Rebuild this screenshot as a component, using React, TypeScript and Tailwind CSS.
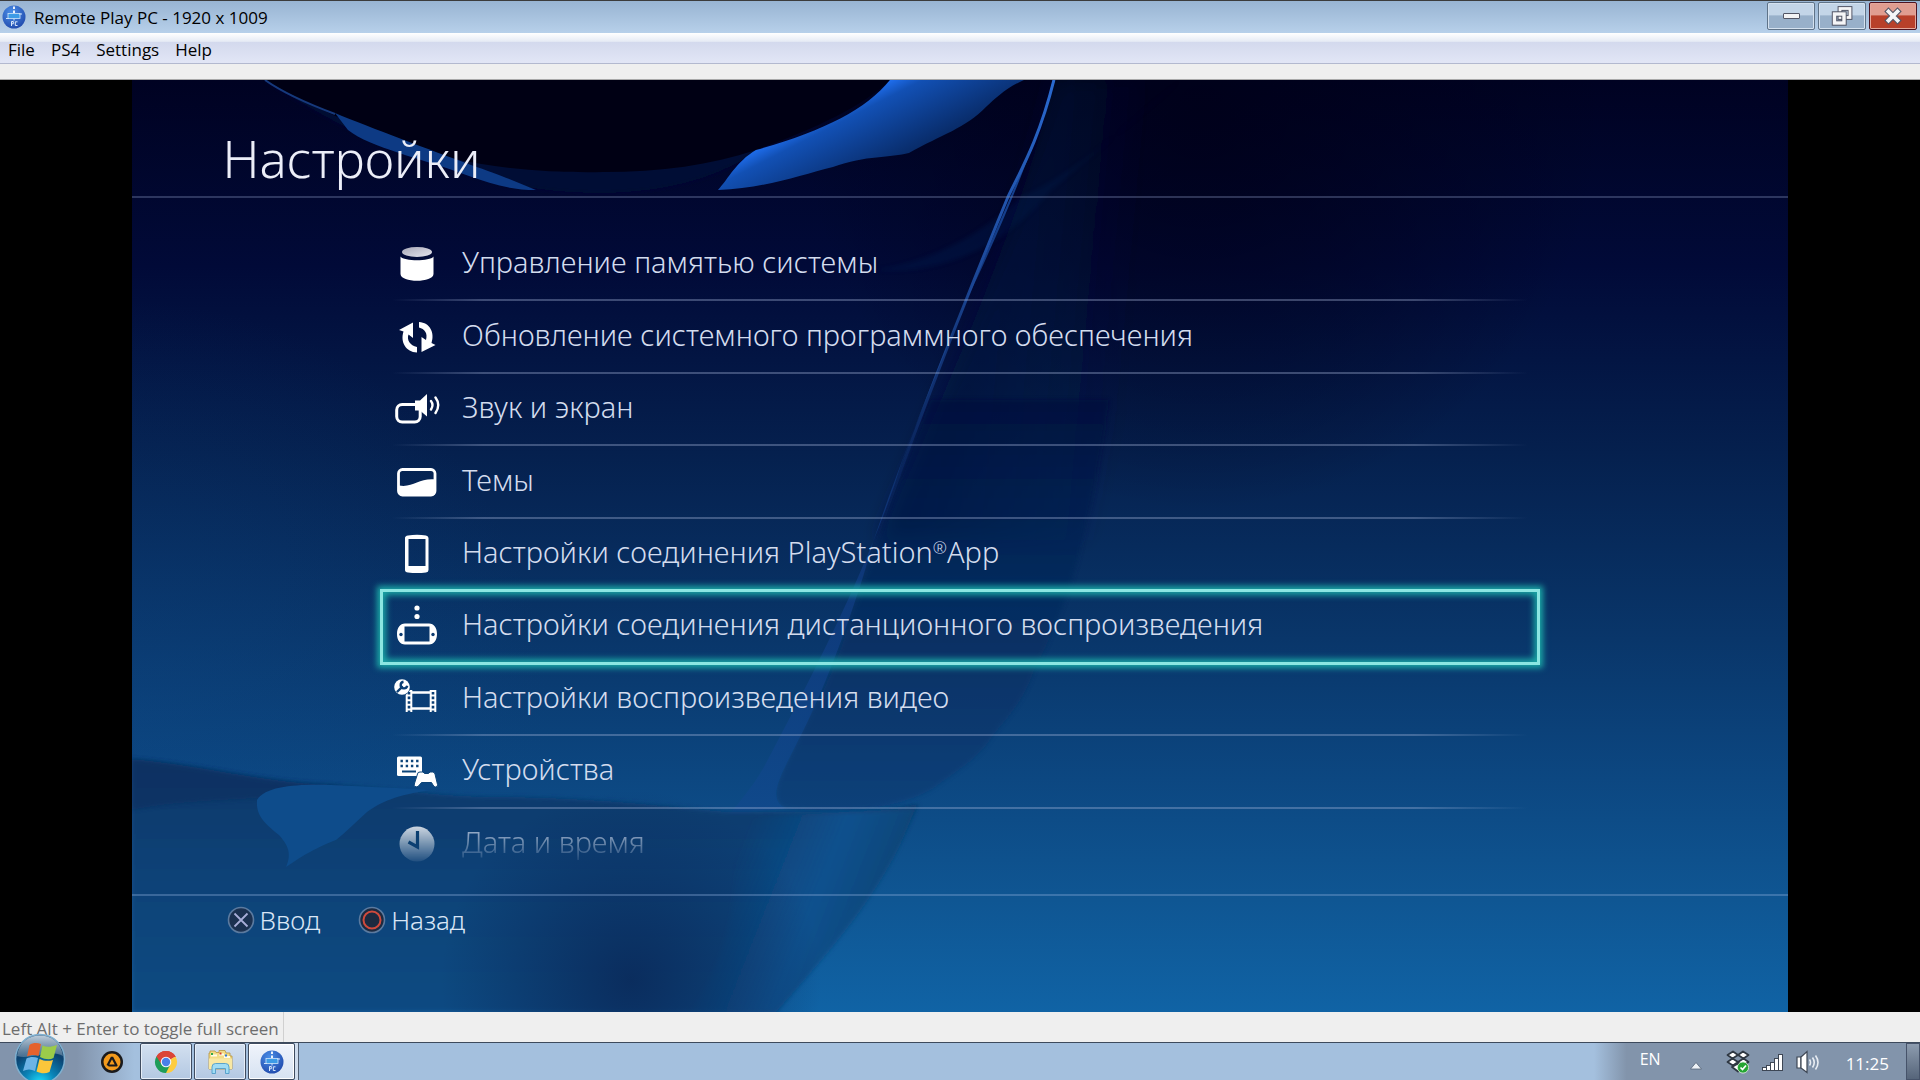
import type { ReactNode } from 'react';

interface MenuItem {
  label: string;
  icon: ReactNode;
  suffix?: string;
}

const MENUS = ['File', 'PS4', 'Settings', 'Help'];

const ITEMS: MenuItem[] = [
  { label: 'Управление памятью системы', icon: <StorageIcon /> },
  { label: 'Обновление системного программного обеспечения', icon: <UpdateIcon /> },
  { label: 'Звук и экран', icon: <SoundIcon /> },
  { label: 'Темы', icon: <ThemeIcon /> },
  { label: 'Настройки соединения PlayStation', suffix: 'App', icon: <PhoneIcon /> },
  { label: 'Настройки соединения дистанционного воспроизведения', icon: <RemoteIcon /> },
  { label: 'Настройки воспроизведения видео', icon: <VideoIcon /> },
  { label: 'Устройства', icon: <DevicesIcon /> },
  { label: 'Дата и время', icon: <ClockIcon /> },
];

const SELECTED = 5;

function StorageIcon() {
  return (
    <svg viewBox="0 0 48 48" className="size-12" aria-hidden="true">
      <defs>
        <linearGradient id="lid" x1="0" y1="0" x2="1" y2="1">
          <stop offset="0" stopColor="#a9a9b8" />
          <stop offset="1" stopColor="#e4e4ee" />
        </linearGradient>
      </defs>
      <ellipse cx="24" cy="12" rx="15" ry="5" fill="url(#lid)" />
      <path d="M7.500 16.500C11 21.500 37 21.500 40.500 16.500V34C40.500 43 7.500 43 7.500 34Z" fill="#fff" />
    </svg>
  );
}

function UpdateIcon() {
  return (
    <svg viewBox="0 0 48 48" className="size-12" fill="#fff" aria-hidden="true">
      <path d="M6 17L20 9.500V25L15.500 21.500C13.500 27 17 32.500 24 34V39.500C13 39 7 29 10.500 18.500Z" />
      <path d="M26 9C37 9.500 42 20 38.500 30L42.500 32L28.500 39V24L33 27C35 20 31.500 16 26 14.500Z" />
    </svg>
  );
}

function SoundIcon() {
  return (
    <svg viewBox="0 0 48 48" className="size-12" fill="none" aria-hidden="true">
      <rect x="3.700" y="19.500" width="23.500" height="17.500" rx="5.500" stroke="#fff" strokeWidth="3" />
      <path d="M22 15.500H27L34 9V31.500L27 25.500H22Z" fill="#fff" />
      <path d="M38 16Q41 20 38 24.500M42.500 12.500Q48 20 42.500 28" stroke="#fff" strokeWidth="2.400" strokeLinecap="round" />
    </svg>
  );
}

function ThemeIcon() {
  return (
    <svg viewBox="0 0 48 48" className="size-12" aria-hidden="true">
      <rect x="5.500" y="11.500" width="36.500" height="25.500" rx="4" fill="none" stroke="#fff" strokeWidth="2.800" />
      <path d="M6 27.500C20 30 26 20 42 21.500V35Q42 37.500 39 37.500H9Q6 37.500 6 35Z" fill="#fff" />
    </svg>
  );
}

function PhoneIcon() {
  return (
    <svg viewBox="0 0 48 48" className="size-12" aria-hidden="true">
      <path
        fill="#fff"
        fillRule="evenodd"
        d="M15 5.500Q24 4 33 5.500Q35.500 6 35.500 8V40Q35.500 42 33 42.500Q24 43.500 15 42.500Q12 42 12 40V8Q12 6 15 5.500ZM15.500 9V36H32.500V9Z"
      />
    </svg>
  );
}

function RemoteIcon() {
  return (
    <svg viewBox="0 0 48 48" className="size-12" aria-hidden="true">
      <circle cx="24" cy="6" r="2.600" fill="#fff" />
      <circle cx="24" cy="14.500" r="2.600" fill="#fff" />
      <path
        fill="#fff"
        fillRule="evenodd"
        d="M12 21.500H36C41 21.500 44 26 44 32S41 42.500 36 42.500H12C7 42.500 4 38 4 32S7 21.500 12 21.500ZM11.500 24.500V39.500H36.500V24.500Z"
      />
      <circle cx="8" cy="32.500" r="1.700" fill="#0b3a70" />
      <circle cx="40" cy="32.500" r="1.700" fill="#0b3a70" />
    </svg>
  );
}

function VideoIcon() {
  return (
    <svg viewBox="0 0 48 48" className="size-12" fill="none" aria-hidden="true">
      <path d="M16 15V37M40 15V37" stroke="#fff" strokeWidth="6.600" />
      <path d="M16 17.500H40M16 33.500H40" stroke="#fff" strokeWidth="2.400" />
      <path d="M16 17V37M40 17V37" stroke="#0b3f75" strokeWidth="2.600" strokeDasharray="2.600 2" />
      <circle cx="9" cy="12" r="8.600" fill="#0b3f75" />
      <circle cx="9" cy="12" r="7.800" fill="#fff" />
      <path d="M4.500 16.500L9 12" stroke="#0b3f75" strokeWidth="2.400" strokeLinecap="round" />
      <path d="M10.500 6.800A3.300 3.300 0 1 0 14.200 10.800" stroke="#0b3f75" strokeWidth="2.400" />
    </svg>
  );
}

function DevicesIcon() {
  return (
    <svg viewBox="0 0 48 48" className="size-12" fill="none" aria-hidden="true">
      <rect x="4" y="9.500" width="25" height="19.500" rx="1.500" fill="#fff" />
      <path d="M7.500 14H26M7.500 19H26" stroke="#0c4478" strokeWidth="2.400" strokeDasharray="2.400 2.800" />
      <path d="M9 24.500H23" stroke="#0c4478" strokeWidth="2" />
      <path
        d="M24.500 27Q24.500 25 27 25H30L31.500 26.500H35.500L37 25H39.500Q41.500 25 42 27L44.500 37.500Q45 40 42.500 40Q41 40 40 38L38.500 35.500H28.500L25.500 39Q24 40.500 22 39.500Q21 39 21.300 37Z"
        fill="#fff"
        stroke="#0c4478"
        strokeWidth="1"
      />
    </svg>
  );
}

function ClockIcon() {
  return (
    <svg viewBox="0 0 48 48" className="size-12" aria-hidden="true">
      <circle cx="24" cy="24" r="17.500" fill="#fff" />
      <path d="M24.500 11V27L15.500 22" fill="none" stroke="#0b4070" strokeWidth="3.200" />
    </svg>
  );
}

function Waves() {
  return (
    <svg
      viewBox="131 80 1657 932"
      preserveAspectRatio="none"
      className="absolute inset-0 size-full"
      aria-hidden="true"
    >
      <defs>
        <linearGradient id="sky" x1="0" y1="0" x2="0" y2="1">
          <stop offset="0" stopColor="#000222" />
          <stop offset="0.200" stopColor="#010a38" />
          <stop offset="0.400" stopColor="#05204e" />
          <stop offset="0.600" stopColor="#09366a" />
          <stop offset="0.750" stopColor="#0c4781" />
          <stop offset="0.880" stopColor="#0f5693" />
          <stop offset="1" stopColor="#1063a5" />
        </linearGradient>
        <radialGradient id="night" gradientUnits="userSpaceOnUse" cx="1200" cy="110" r="400">
          <stop offset="0" stopColor="#000018" stopOpacity="0.800" />
          <stop offset="1" stopColor="#000018" stopOpacity="0" />
        </radialGradient>
        <linearGradient id="crescent" gradientUnits="userSpaceOnUse" x1="820" y1="115" x2="855" y2="183">
          <stop offset="0" stopColor="#1f6ff0" />
          <stop offset="0.200" stopColor="#1250b4" />
          <stop offset="1" stopColor="#082a66" />
        </linearGradient>
        <linearGradient id="petal" gradientUnits="userSpaceOnUse" x1="0" y1="80" x2="0" y2="810">
          <stop offset="0" stopColor="#00021e" stopOpacity="0.500" />
          <stop offset="0.400" stopColor="#010a38" />
          <stop offset="0.700" stopColor="#062a5c" />
          <stop offset="1" stopColor="#0b3c74" />
        </linearGradient>
        <linearGradient id="petalFade" gradientUnits="userSpaceOnUse" x1="900" y1="400" x2="1120" y2="420">
          <stop offset="0" stopColor="#020a36" stopOpacity="0.850" />
          <stop offset="1" stopColor="#05204e" stopOpacity="0" />
        </linearGradient>
        <linearGradient id="band" gradientUnits="userSpaceOnUse" x1="0" y1="80" x2="0" y2="820">
          <stop offset="0" stopColor="#1d5bc0" />
          <stop offset="0.250" stopColor="#16418e" />
          <stop offset="0.550" stopColor="#0f3478" />
          <stop offset="1" stopColor="#10498c" />
        </linearGradient>
        <linearGradient id="edge" gradientUnits="userSpaceOnUse" x1="0" y1="80" x2="0" y2="540">
          <stop offset="0" stopColor="#2a6ad0" />
          <stop offset="0.400" stopColor="#1d4a9c" />
          <stop offset="1" stopColor="#153c80" stopOpacity="0" />
        </linearGradient>
        <linearGradient id="floor" gradientUnits="userSpaceOnUse" x1="0" y1="760" x2="0" y2="1012">
          <stop offset="0" stopColor="#0a3768" />
          <stop offset="0.450" stopColor="#0b4277" />
          <stop offset="1" stopColor="#0c4a82" />
        </linearGradient>
        <radialGradient id="pool" gradientUnits="userSpaceOnUse" cx="630" cy="980" r="190">
          <stop offset="0" stopColor="#0a2858" stopOpacity="0.850" />
          <stop offset="1" stopColor="#0a2858" stopOpacity="0" />
        </radialGradient>
        <linearGradient id="stem" gradientUnits="userSpaceOnUse" x1="730" y1="870" x2="870" y2="925">
          <stop offset="0" stopColor="#0e5290" stopOpacity="0" />
          <stop offset="0.600" stopColor="#0e5290" stopOpacity="0.900" />
          <stop offset="1" stopColor="#0c4679" />
        </linearGradient>
        <radialGradient id="vignette" gradientUnits="userSpaceOnUse" cx="131" cy="720" r="420">
          <stop offset="0" stopColor="#0d4888" stopOpacity="0.300" />
          <stop offset="1" stopColor="#0d4888" stopOpacity="0" />
        </radialGradient>
        <filter id="soft">
          <feGaussianBlur stdDeviation="2" />
        </filter>
        <filter id="haze">
          <feGaussianBlur stdDeviation="10" />
        </filter>
      </defs>
      <rect x="131" y="80" width="1657" height="932" fill="url(#sky)" />
      <rect x="131" y="80" width="1657" height="932" fill="url(#night)" />
      <rect x="131" y="80" width="1657" height="932" fill="url(#vignette)" />

      {/* disc and the ribbons round it */}
      <path d="M264 80C400 170 520 195 610 193C700 190 760 160 800 110V80Z" fill="#060a36" filter="url(#soft)" />
      <path d="M264 80C330 118 400 145 450 158C500 170 560 173 602 172C660 172 710 165 755 150C810 130 860 108 889 80Z" fill="#000014" />
      <path d="M264 80C285 95 310 105 334 114" fill="none" stroke="#16397c" strokeWidth="2" />
      <path d="M334 113C370 128 430 150 470 165C500 175 520 184 535 190C510 190 490 184 468 176C420 158 370 148 347 130Z" fill="#0d3a84" />
      <path d="M889 80C865 110 820 132 755 150C735 162 728 178 717 190C765 188 800 175 832 167C865 155 890 158 908 153C940 135 965 128 985 107C995 98 1005 88 1023 80Z" fill="url(#crescent)" />
      <path d="M1180 80C1100 150 1060 180 1020 197C980 235 930 262 875 270C950 275 1010 240 1050 190Z" fill="#061c50" opacity="0.350" filter="url(#soft)" />

      {/* tall petal */}
      <path d="M1053 80C1020 230 930 420 880 540H1085C1110 440 1150 250 1240 80Z" fill="url(#petalFade)" filter="url(#haze)" />
      <path d="M930 400C890 500 850 620 838 653C825 690 805 720 795 745C780 775 765 800 785 808C820 812 850 810 872 808C905 802 925 795 941 782C965 765 980 755 993 734C1012 712 1025 695 1033 671C1050 640 1075 580 1085 524C1095 490 1100 450 1108 400Z" fill="url(#petal)" opacity="0.650" filter="url(#soft)" />
      <path d="M1052 80C1035 150 990 250 960 312C935 370 915 425 900 465C870 560 820 660 763 767C750 790 735 805 723 822C750 808 765 812 785 808C765 800 780 775 795 745C825 690 860 590 872 542C900 460 925 400 945 350C975 270 1030 160 1054 80Z" fill="url(#band)" opacity="0.850" />
      <path d="M1053 80C1038 140 1020 170 1007 197C985 250 975 275 962 308C935 375 915 430 900 470L875 540" fill="none" stroke="url(#edge)" strokeWidth="3" />

      {/* lower folds */}
      <path d="M131 759C200 765 260 782 319 784C400 788 430 797 500 797C600 798 660 806 726 812C800 812 860 815 918 804L901 837L855 904L803 977L775 1012H131Z" fill="url(#floor)" filter="url(#soft)" />
      <path d="M131 759C200 765 260 782 340 786L310 795C240 800 180 800 131 810Z" fill="#082f5e" opacity="0.600" filter="url(#soft)" />
      <path d="M256 800C265 785 300 784 330 785C370 787 400 788 430 790C395 795 380 802 366 812C355 822 345 832 335 840C310 850 300 857 285 867C292 852 285 843 278 835C262 822 255 815 256 800Z" fill="#0e4c8b" />
      <path d="M730 822C780 812 850 814 914 808C890 880 840 940 775 1012H690C730 950 740 890 730 822Z" fill="url(#stem)" filter="url(#soft)" />
      <rect x="400" y="780" width="460" height="232" fill="url(#pool)" />
    </svg>
  );
}

function RemoteLogo({ className }: { className: string }) {
  return (
    <svg viewBox="0 0 24 24" className={className} aria-hidden="true">
      <defs>
        <radialGradient id="logo" cx="0.400" cy="0.300" r="0.800">
          <stop offset="0" stopColor="#4b8fe8" />
          <stop offset="1" stopColor="#1d45a8" />
        </radialGradient>
      </defs>
      <circle cx="12" cy="12" r="11.500" fill="url(#logo)" />
      <path d="M12 1.500V4M12 5.500V8" stroke="#fff" strokeWidth="1.800" />
      <rect x="6" y="8.500" width="12" height="5" fill="#3d9be6" stroke="#cfe4fb" strokeWidth="0.800" />
      <path d="M4 13.500H7M17 9H20M12 13.500V15.500" stroke="#cfe4fb" strokeWidth="1" />
      <path d="M9.500 21V16.500H11.300V18.800H9.500M15.500 16.800H13.300V20.500H15.500" fill="none" stroke="#dbe9fb" strokeWidth="1" />
    </svg>
  );
}

function TitleBar() {
  return (
    <header className="flex h-[33px] items-center border-t border-[#3b3b3b] bg-linear-to-b from-[#98b4d2] to-[#b7d0ea] pl-[2px] pr-[3px]">
      <RemoteLogo className="size-6" />
      <h1 className="ml-2 flex-1 pt-[2px] text-[17px] leading-6 text-black">Remote Play PC - 1920 x 1009</h1>
      <div className="flex gap-[3px] self-start pt-px">
        <button
          aria-label="Minimize"
          className="grid h-7 w-12 place-items-center rounded-xs border border-[#5f7388] bg-linear-to-b from-[#c3d5e8] from-45% to-[#98b0ca] to-50% shadow-[inset_0_0_0_1px_#d5e2f0]"
        >
          <span className="h-[6px] w-[17px] rounded-[1px] border border-[#535666] bg-[#f3f3f5]" />
        </button>
        <button
          aria-label="Restore"
          className="grid h-7 w-12 place-items-center rounded-xs border border-[#5f7388] bg-linear-to-b from-[#c3d5e8] from-45% to-[#98b0ca] to-50% shadow-[inset_0_0_0_1px_#d5e2f0]"
        >
          <svg viewBox="0 0 22 20" className="h-5 w-[22px]" fill="none" aria-hidden="true">
            <rect x="9" y="2.500" width="10" height="9" stroke="#535666" strokeWidth="4.800" />
            <rect x="9" y="2.500" width="10" height="9" stroke="#f5f5f7" strokeWidth="2.800" />
            <rect x="3.500" y="8" width="9.500" height="9" stroke="#535666" strokeWidth="5.400" />
            <rect x="3.500" y="8" width="9.500" height="9" stroke="#f5f5f7" strokeWidth="3.400" />
          </svg>
        </button>
        <button
          aria-label="Close"
          className="grid h-7 w-12 place-items-center rounded-xs border border-[#4e1420] bg-linear-to-b from-[#e09d90] from-45% to-[#b8402a] to-50% shadow-[inset_0_0_0_1px_#e3a79c]"
        >
          <svg viewBox="0 0 20 18" className="h-[18px] w-5" fill="none" strokeLinecap="square" aria-hidden="true">
            <path d="M5.500 4.500L14.500 13.500M14.500 4.500L5.500 13.500" stroke="#535666" strokeWidth="6" />
            <path d="M5.500 4.500L14.500 13.500M14.500 4.500L5.500 13.500" stroke="#f5f5f7" strokeWidth="3.800" />
          </svg>
        </button>
      </div>
    </header>
  );
}

function MenuBar() {
  return (
    <nav className="flex h-[31px] items-center gap-4 border-b border-[#b3b9cf] bg-[linear-gradient(to_bottom,#ffffff,#e6ebf5_28%,#d3d9ed_30%,#e2e6f6)] pl-2 pt-[3px]">
      {MENUS.map((menu) => (
        <button key={menu} className="text-[17px] leading-6 text-black">
          {menu}
        </button>
      ))}
    </nav>
  );
}

function SettingsScreen() {
  return (
    <section className="relative aspect-video h-full overflow-hidden font-['Noto_Sans','Open_Sans',sans-serif] font-light text-[#d3dcee]">
      <Waves />
      <div className="relative flex h-full flex-col">
        <div className="flex h-[118px] items-center border-b-2 border-[#8090b8]/35 pl-[91px] pt-10">
          <h2 className="text-[51px] leading-[72px] text-[#eceef8]">Настройки</h2>
        </div>
        <ul className="flex flex-1 flex-col px-[15%] pt-[30px] pb-[14px]">
          {ITEMS.map((item, i) => (
            <li key={item.label} className="relative flex flex-1">
              <button
                className={
                  i === ITEMS.length - 1
                    ? 'flex flex-1 items-center gap-[21px] pl-[13px] text-left text-[29px] leading-10 opacity-80 [mask-image:linear-gradient(to_bottom,black_25%,transparent_80%)]'
                    : 'flex flex-1 items-center gap-[21px] pl-[13px] text-left text-[29px] leading-10'
                }
              >
                {item.icon}
                <span className="pb-1">
                  {item.label}
                  {item.suffix && (
                    <>
                      <sup className="text-[17px] leading-none">®</sup>
                      {item.suffix}
                    </>
                  )}
                </span>
              </button>
              {i === SELECTED ? (
                <span className="pointer-events-none absolute -top-px -bottom-[2px] inset-x-0 border-3 border-[#8be6e2] shadow-[0_0_6px_3px_#1ba8a6,inset_0_0_6px_3px_#1ba8a6]" />
              ) : (
                i !== SELECTED - 1 &&
                i !== ITEMS.length - 1 && (
                  <span className="absolute -bottom-px left-3 right-3 h-[2px] bg-[linear-gradient(to_right,transparent,#a9b8dc59_8%,#a9b8dc59_90%,transparent)]" />
                )
              )}
            </li>
          ))}
        </ul>
        <footer className="flex h-[118px] items-start gap-[38px] border-t-2 border-[#8fb0dc]/35 pl-[95px] pt-1 text-[26px] leading-10 text-[#d9e6f6]">
          <button className="flex items-center gap-[5px]">
            <svg viewBox="0 0 28 28" className="size-7" fill="none" aria-hidden="true">
              <circle cx="14" cy="14" r="12.500" fill="#1c3150" stroke="#5b7a9f" strokeWidth="1.600" />
              <path d="M7.500 7.500L20.500 20.500M20.500 7.500L7.500 20.500" stroke="#a9aed8" strokeWidth="1.800" />
            </svg>
            Ввод
          </button>
          <button className="flex items-center gap-[5px]">
            <svg viewBox="0 0 28 28" className="size-7" fill="none" aria-hidden="true">
              <circle cx="14" cy="14" r="12.500" fill="#1c2a40" stroke="#5b7a9f" strokeWidth="1.600" />
              <circle cx="14" cy="14" r="8.500" stroke="#cf4a3c" strokeWidth="2" />
            </svg>
            Назад
          </button>
        </footer>
      </div>
    </section>
  );
}

function StartOrb() {
  return (
    <svg viewBox="0 0 52 52" className="size-[52px]" aria-hidden="true">
      <defs>
        <radialGradient id="orb" cx="0.500" cy="1" r="0.900">
          <stop offset="0" stopColor="#1fe0ff" />
          <stop offset="0.350" stopColor="#0a84b8" />
          <stop offset="0.750" stopColor="#0b4270" />
          <stop offset="1" stopColor="#234a70" />
        </radialGradient>
        <linearGradient id="gloss" x1="0" y1="0" x2="0" y2="1">
          <stop offset="0" stopColor="#cfdbe6" stopOpacity="0.900" />
          <stop offset="1" stopColor="#7f9ab0" stopOpacity="0.500" />
        </linearGradient>
      </defs>
      <circle cx="26" cy="26" r="24.500" fill="url(#orb)" stroke="#7fb0d0" strokeWidth="1.500" />
      <path d="M3 23C5 9 15 2.500 26 2.500S47 9 49 23C36 16 16 27 3 23Z" fill="url(#gloss)" />
      <path d="M15.500 12C19 9.500 23 9.500 27 11L24.500 23C21 21.500 17 21.500 13 23.500Z" fill="#e5622c" />
      <path d="M28.500 12.500C33 14.500 37 14 43 12L39.500 25C36 27 31 26.500 26 24Z" fill="#9bcb4a" />
      <path d="M12.500 25.500C16 23.500 20 23.500 24 25L21 38C17 36 13 36 9 38Z" fill="#6db4e6" />
      <path d="M25.500 26C30 28 34 28.500 39 27L35.500 39C31 41 27 40.500 22.500 38.500Z" fill="#fbc63b" />
    </svg>
  );
}

function TaskBar() {
  return (
    <footer className="relative flex h-[38px] items-stretch border-t border-[#3d4a5c] bg-linear-to-r from-[#8294ac] from-4% via-[#a4c0de] via-7% to-[#a4c0de]">
      <button aria-label="Start" className="absolute -top-[10px] left-[14px] h-[47px] overflow-hidden">
        <StartOrb />
      </button>
      <button aria-label="AIMP" className="ml-[87px] grid w-[50px] place-items-center">
        <svg viewBox="0 0 24 24" className="size-6" fill="none" aria-hidden="true">
          <circle cx="12" cy="12" r="11" fill="#1a1a1c" />
          <circle cx="12" cy="12" r="8.500" fill="#f39a1c" />
          <path d="M12 7L16.500 15.500H8.500M12 7L7.500 15.500" stroke="#1a1a1c" strokeWidth="2.200" strokeLinejoin="round" />
        </svg>
      </button>
      <button
        aria-label="Chrome"
        className="ml-[3px] grid w-[52px] place-items-center rounded-xs border border-[#3f4c60] bg-linear-to-b from-[#d3e0f0] to-[#b3c8e2] shadow-[inset_0_0_0_1px_#e6eef8]"
      >
        <svg viewBox="0 0 24 24" className="size-6" aria-hidden="true">
          <path d="M12 12L2.470 6.500A11 11 0 0 1 21.530 6.500Z" fill="#db4437" />
          <path d="M12 12L2.470 6.500A11 11 0 0 0 12 23Z" fill="#1e9d58" />
          <path d="M12 12L12 23A11 11 0 0 0 21.530 6.500Z" fill="#fdcc3f" />
          <path d="M2.470 6.500L7.700 14.500L12 12V7H21.800L21.530 6.500A11 11 0 0 0 2.470 6.500Z" fill="#db4437" />
          <path d="M12 23L16.300 14.500L12 12L7.700 14.500Z" fill="#1e9d58" />
          <circle cx="12" cy="12" r="5.300" fill="#f4f6fa" />
          <circle cx="12" cy="12" r="4.200" fill="#4a80e8" />
        </svg>
      </button>
      <button
        aria-label="Explorer"
        className="ml-[2px] grid w-[52px] place-items-center rounded-xs border border-[#3f4c60] bg-linear-to-b from-[#d3e0f0] to-[#b3c8e2] shadow-[inset_0_0_0_1px_#e6eef8]"
      >
        <svg viewBox="0 0 26 26" className="size-[26px]" aria-hidden="true">
          <path d="M3 4V2H8L9 3.500H12V1.500H18L19 4H23V7H25V20H2V4Z" fill="#f3dc85" stroke="#b8963c" strokeWidth="0.800" />
          <path d="M4 6.500H10M12 5.500H17M17 8H23" stroke="#fffbe8" strokeWidth="2" />
          <path d="M4 5H6" stroke="#2da84a" strokeWidth="2" />
          <path d="M12.500 4.500H14.500" stroke="#d43c2c" strokeWidth="2" />
          <path d="M18 6.500H20" stroke="#2f78d8" strokeWidth="2" />
          <path d="M2 9.500H25V20H2Z" fill="#f8e8a4" />
          <path d="M5 24.500V18Q5 14.500 8.500 14.500H18.500Q22 14.500 22 18V24.500H18.500V19.500H8.500V24.500Z" fill="#9fdcf4" stroke="#4f9cc8" strokeWidth="0.900" />
        </svg>
      </button>
      <button
        aria-label="Remote Play PC"
        className="ml-[2px] grid w-[47px] place-items-center rounded-xs border border-[#3f4c60] bg-linear-to-b from-[#f0f4fb] to-[#d6e2f2] shadow-[inset_0_0_0_1px_#ffffff]"
      >
        <RemoteLogo className="size-6" />
      </button>
      <span className="w-1 border-r border-[#4e5d72] bg-[#cfdcec]" />
      <div className="flex-1" />
      <div className="flex items-center bg-linear-to-r from-transparent to-[#8294ab] to-10% pl-[46px] text-white">
        <span className="pb-[5px] text-base leading-6">EN</span>
        <svg viewBox="0 0 12 8" className="ml-[29px] mt-2 h-2 w-3" aria-hidden="true">
          <path d="M6 0.500L11.500 7H0.500Z" fill="#eef2f7" stroke="#56657a" strokeWidth="0.800" />
        </svg>
        <svg viewBox="0 0 24 24" className="ml-6 size-6" aria-hidden="true">
          <g fill="#fff" stroke="#2e3742" strokeWidth="1.800" strokeLinejoin="round">
            <path d="M7 1.500L12 5L6.500 8.500L1.500 5Z" />
            <path d="M17 1.500L22.500 5L17.500 8.500L12 5Z" />
            <path d="M6.500 8.500L12 12L7 15.500L1.500 12Z" />
            <path d="M17.500 8.500L22.500 12L17 15.500L12 12Z" />
            <path d="M6 17L12 13.500L18 17L12 21.500Z" />
          </g>
          <circle cx="17" cy="17.500" r="5.600" fill="#25a532" stroke="#e6f2e6" strokeWidth="0.800" />
          <path d="M14.500 17.500L16.500 19.500L20 15.500" fill="none" stroke="#fff" strokeWidth="1.700" />
        </svg>
        <svg viewBox="0 0 22 18" className="ml-3 h-[18px] w-[22px]" fill="#fff" stroke="#3d4654" strokeWidth="1" aria-hidden="true">
          <rect x="0.500" y="14.500" width="4" height="3" />
          <rect x="4.500" y="12.500" width="4" height="5" />
          <rect x="8.500" y="9.500" width="4" height="8" />
          <rect x="12.500" y="5.500" width="4" height="12" />
          <rect x="16.500" y="1.500" width="4" height="16" />
        </svg>
        <svg viewBox="0 0 24 24" className="ml-3 size-6" fill="none" aria-hidden="true">
          <path d="M1 7H5V18H1Z" fill="#fff" stroke="#3d4654" strokeWidth="1.200" />
          <path d="M5 7L11 1.500V22.500L5 18Z" fill="#fff" stroke="#3d4654" strokeWidth="1.200" />
          <path d="M13.500 9.500Q15.500 12.500 13.500 15.500M16.500 7.500Q20 12.500 16.500 17.500M19.500 5.500Q24.500 12.500 19.500 19.500" stroke="#e8edf3" strokeWidth="1.600" />
        </svg>
        <time className="ml-[26px] mt-1 text-[17px] leading-6">11:25</time>
        <button
          aria-label="Show desktop"
          className="ml-[17px] w-[14px] self-stretch border border-[#46536a] bg-linear-to-b from-[#8d9caf] to-[#56657a]"
        />
      </div>
    </footer>
  );
}

export default function App() {
  return (
    <div className="flex h-screen flex-col bg-[#f0f0f0] font-['Open_Sans','Noto_Sans',sans-serif]">
      <TitleBar />
      <MenuBar />
      <div className="h-4 border-b border-[#a9a9a9] bg-[#efefef]" />
      <main className="flex min-h-0 flex-1 justify-center bg-black">
        <SettingsScreen />
      </main>
      <div className="flex h-[30px] items-stretch bg-[#efefef] pl-[2px]">
        <p className="border-r border-[#d0d0d0] pr-1 pt-[5px] text-[17px] leading-6 text-[#6d6d6d]">
          Left Alt + Enter to toggle full screen
        </p>
      </div>
      <TaskBar />
    </div>
  );
}
